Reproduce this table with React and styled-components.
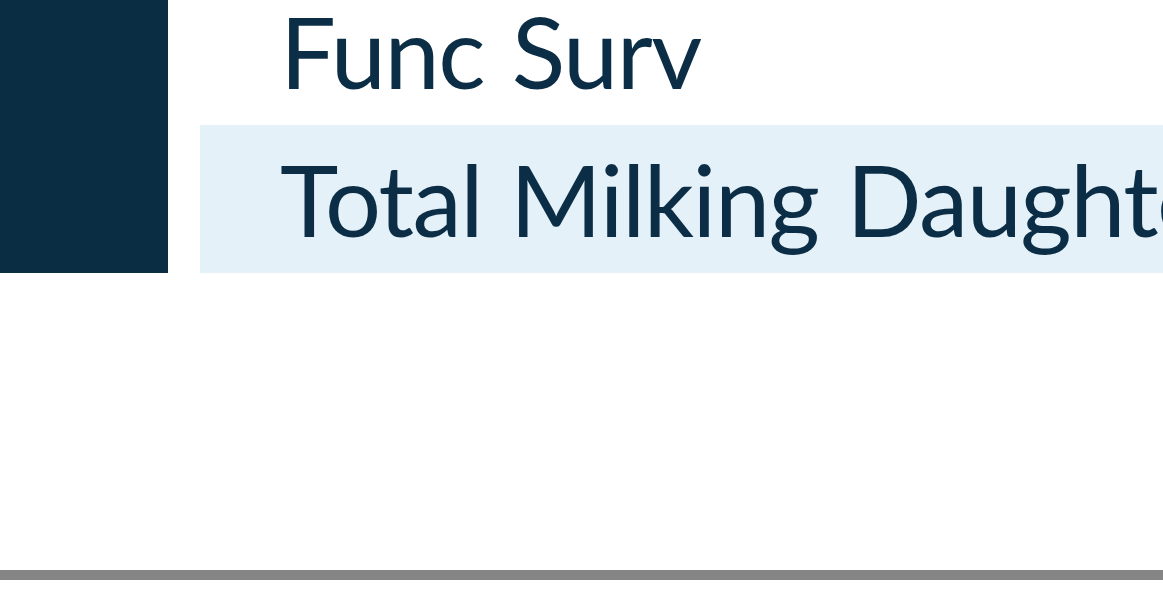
import styled, { createGlobalStyle } from "styled-components";

const GlobalStyle = createGlobalStyle`
  html, body {
    margin: 0;
    padding: 0;
    background: #ffffff;
  }
  body {
    font-family: Lato, "Open Sans", sans-serif;
  }
`;

const Page = styled.div`
  width: 1163px;
  height: 601px;
  overflow: hidden;
  display: flex;
  flex-direction: column;
`;

const Top = styled.div`
  display: flex;
  gap: 32px;
  height: 273px;
  overflow: hidden;
`;

const Marker = styled.div`
  width: 168px;
  flex-shrink: 0;
  background: #0a2d44;
`;

const List = styled.div`
  flex: 1;
  display: flex;
  flex-direction: column;
  margin-top: -23px;
  min-width: 0;
`;

const Item = styled.div`
  height: 148px;
  flex-shrink: 0;
  display: flex;
  align-items: center;
  padding: 0 0 2px 80px;
  box-sizing: border-box;
  white-space: nowrap;
  font-size: 99px;
  letter-spacing: -1.5px;
  word-spacing: 4px;
  color: #0b2d45;
  background: ${(p) => (p.$active ? "#e4f1f9" : "transparent")};
`;

const Rule = styled.div`
  margin-top: 297px;
  height: 10px;
  background: #858585;
`;

export default function App() {
  const items = ["Func Surv", "Total Milking Daughters"];
  return (
    <Page>
      <GlobalStyle />
      <Top>
        <Marker />
        <List>
          {items.map((t, i) => (
            <Item key={t} $active={i === 1}>
              {t}
            </Item>
          ))}
        </List>
      </Top>
      <Rule />
    </Page>
  );
}
